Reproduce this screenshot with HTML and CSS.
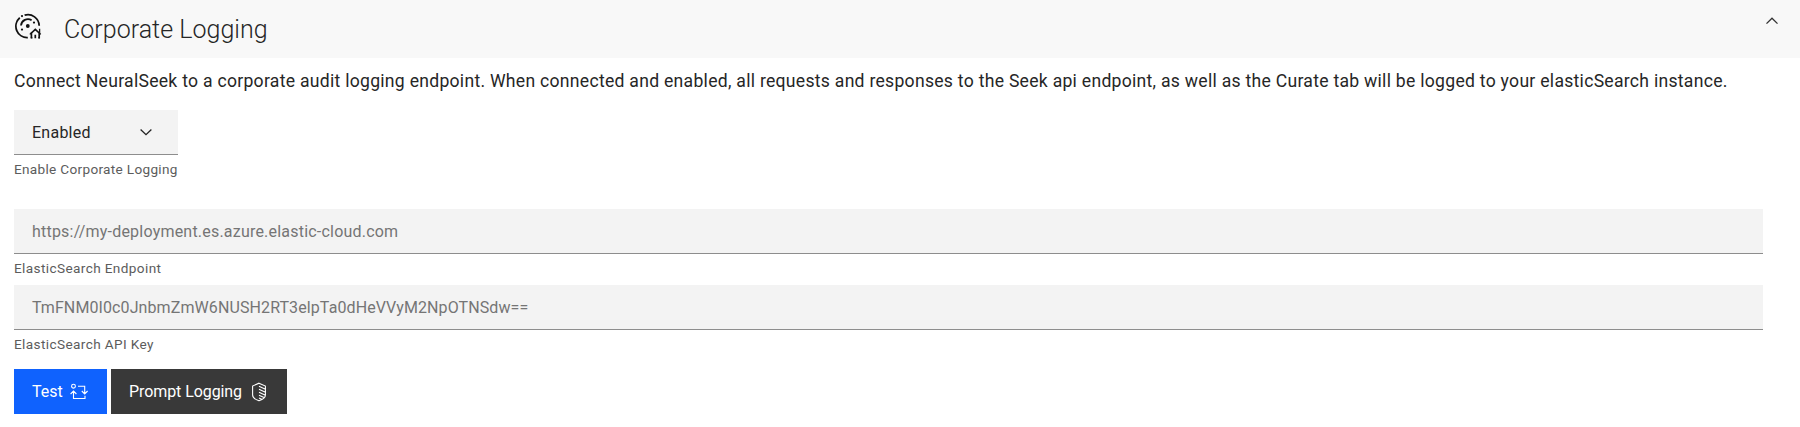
FILE: index.html
```html
<!DOCTYPE html>
<html lang="en">
<head>
<meta charset="utf-8">
<title>Corporate Logging</title>
<link rel="stylesheet" href="styles.css">
</head>
<body>
<header class="panel-header">
  <svg class="panel-icon" width="27" height="27" viewBox="0 0 27 27" fill="none" stroke="#111" stroke-width="1.8">
    <path d="M9.6 2.2A11.3 11.3 0 0 1 24.2 12.8M4.8 4.8A11.3 11.3 0 0 0 12.8 24.6"/>
    <path d="M6 12.5A7 7 0 0 1 16.6 7.2"/>
    <g fill="#111" stroke="none">
      <circle cx="12.8" cy="13" r="1.9"/><circle cx="7" cy="3.1" r="1.1"/>
      <circle cx="19" cy="9.6" r="1.1"/><circle cx="7" cy="16.6" r="1.1"/>
    </g>
    <path d="M16.4 25.3V20L20.3 16.4L24.2 20V25.3M20.3 25.3V21.8" stroke-width="1.7"/>
    <path d="M14.8 21.4L17 19.3M23.6 19.3L25.8 21.4M24.6 15.8V20M15.8 24.8H17.4M23.2 24.8H25" stroke-width="1.3"/>
  </svg>
  <h1 class="panel-title">Corporate Logging</h1>
  <svg class="panel-toggle" width="14" height="8" viewBox="0 0 14 8" fill="none" stroke="#333" stroke-width="1.3"><path d="M1.5 6.6L7 1.2L12.5 6.6"/></svg>
</header>
<main class="panel-body">
  <p class="description">Connect NeuralSeek to a corporate audit logging endpoint. When connected and enabled, all requests and responses to the Seek api endpoint, as well as the Curate tab will be logged to your elasticSearch instance.</p>
  <div class="field field-select">
    <div class="control select"><span class="enabled">Enabled</span>
      <svg width="14" height="8" viewBox="0 0 14 8" fill="none" stroke="#222" stroke-width="1.3"><path d="M1.6 1.5L7 6.7L12.4 1.5"/></svg>
    </div>
    <div class="helper">Enable Corporate Logging</div>
  </div>
  <div class="field">
    <div class="control placeholder url">https://my-deployment.es.azure.elastic-cloud.com</div>
    <div class="helper wide">ElasticSearch Endpoint</div>
  </div>
  <div class="field">
    <div class="control placeholder key">TmFNM0I0c0JnbmZmW6NUSH2RT3elpTa0dHeVVyM2NpOTNSdw==</div>
    <div class="helper wide">ElasticSearch API Key</div>
  </div>
  <div class="actions">
    <button class="btn btn-test">Test
      <svg width="18" height="18" viewBox="0 0 18 18" fill="none" stroke="#fff" stroke-width="1.1"><circle cx="3.5" cy="3.2" r="1.9"/><path d="M8 3.2H14.7V10.6M11.8 8L14.7 10.9L17.6 8M15 12.8V15.5H3.5V8.2M.6 11L3.5 8.1L6.4 11"/></svg>
    </button>
    <button class="btn btn-prompt">Prompt Logging
      <svg width="16" height="20" viewBox="0 0 16 20" fill="none" stroke="#fff" stroke-width="1.1"><path d="M8 1.2L14.4 4V13C14.4 16 11.5 17.6 8 18.8C4.5 17.6 1.6 16 1.6 13V4ZM8 4.2L14.4 7.2M8 7.2L14.4 10.2M8 10.2L14.4 13.2M8 13.2L13.6 15.8M8 16L11.2 17.4"/></svg>
    </button>
  </div>
</main>
</body>
</html>
```
FILE: styles.css
```css
* { box-sizing: border-box; }
body { margin: 0; background: #fff; color: #262626; font-family: Roboto, sans-serif; }
.panel-header { display: flex; align-items: flex-start; height: 58px; padding: 13px 21px 0 15px; background: #f8f8f8; }
.panel-icon { flex: none; }
.panel-title { margin: 2px 0 0 22px; font-size: 25px; line-height: 30px; font-weight: 300; letter-spacing: 0.03px; }
.panel-toggle { margin: 4px 0 0 auto; }
.panel-body { padding: 11px 37px 0 14px; }
.description { margin: 0; font-size: 17.6px; line-height: 24px; letter-spacing: 0.272px; white-space: nowrap; }
.field { height: 76px; }
.field-select { width: 164px; height: 99px; margin-top: 17px; }
.control { display: flex; align-items: center; height: 45px; padding: 0 17px 0 18px; background: #f3f3f3; border-bottom: 1px solid #8d8d8d; font-size: 16px; white-space: nowrap; }
.select { justify-content: space-between; padding-right: 25px; }
.enabled { letter-spacing: 0.25px; }
.placeholder { color: #757575; }
.url { letter-spacing: 0.21px; }
.key { letter-spacing: 0.1px; }
.helper { margin-top: 5px; color: #5c5c5c; font-size: 13.6px; line-height: 18px; letter-spacing: 0.31px; white-space: nowrap; }
.wide { letter-spacing: 0.38px; }
.actions { display: flex; gap: 4px; margin-top: 8px; }
.btn { display: flex; align-items: center; justify-content: space-between; height: 45px; padding: 0 18px; border: 0; color: #fff; font: 16px/20px Roboto, sans-serif; white-space: nowrap; }
.btn-test { width: 93px; padding-right: 19px; background: #0f62fe; }
.btn-prompt { width: 176px; padding-right: 20px; background: #393939; letter-spacing: -0.08px; }
```
